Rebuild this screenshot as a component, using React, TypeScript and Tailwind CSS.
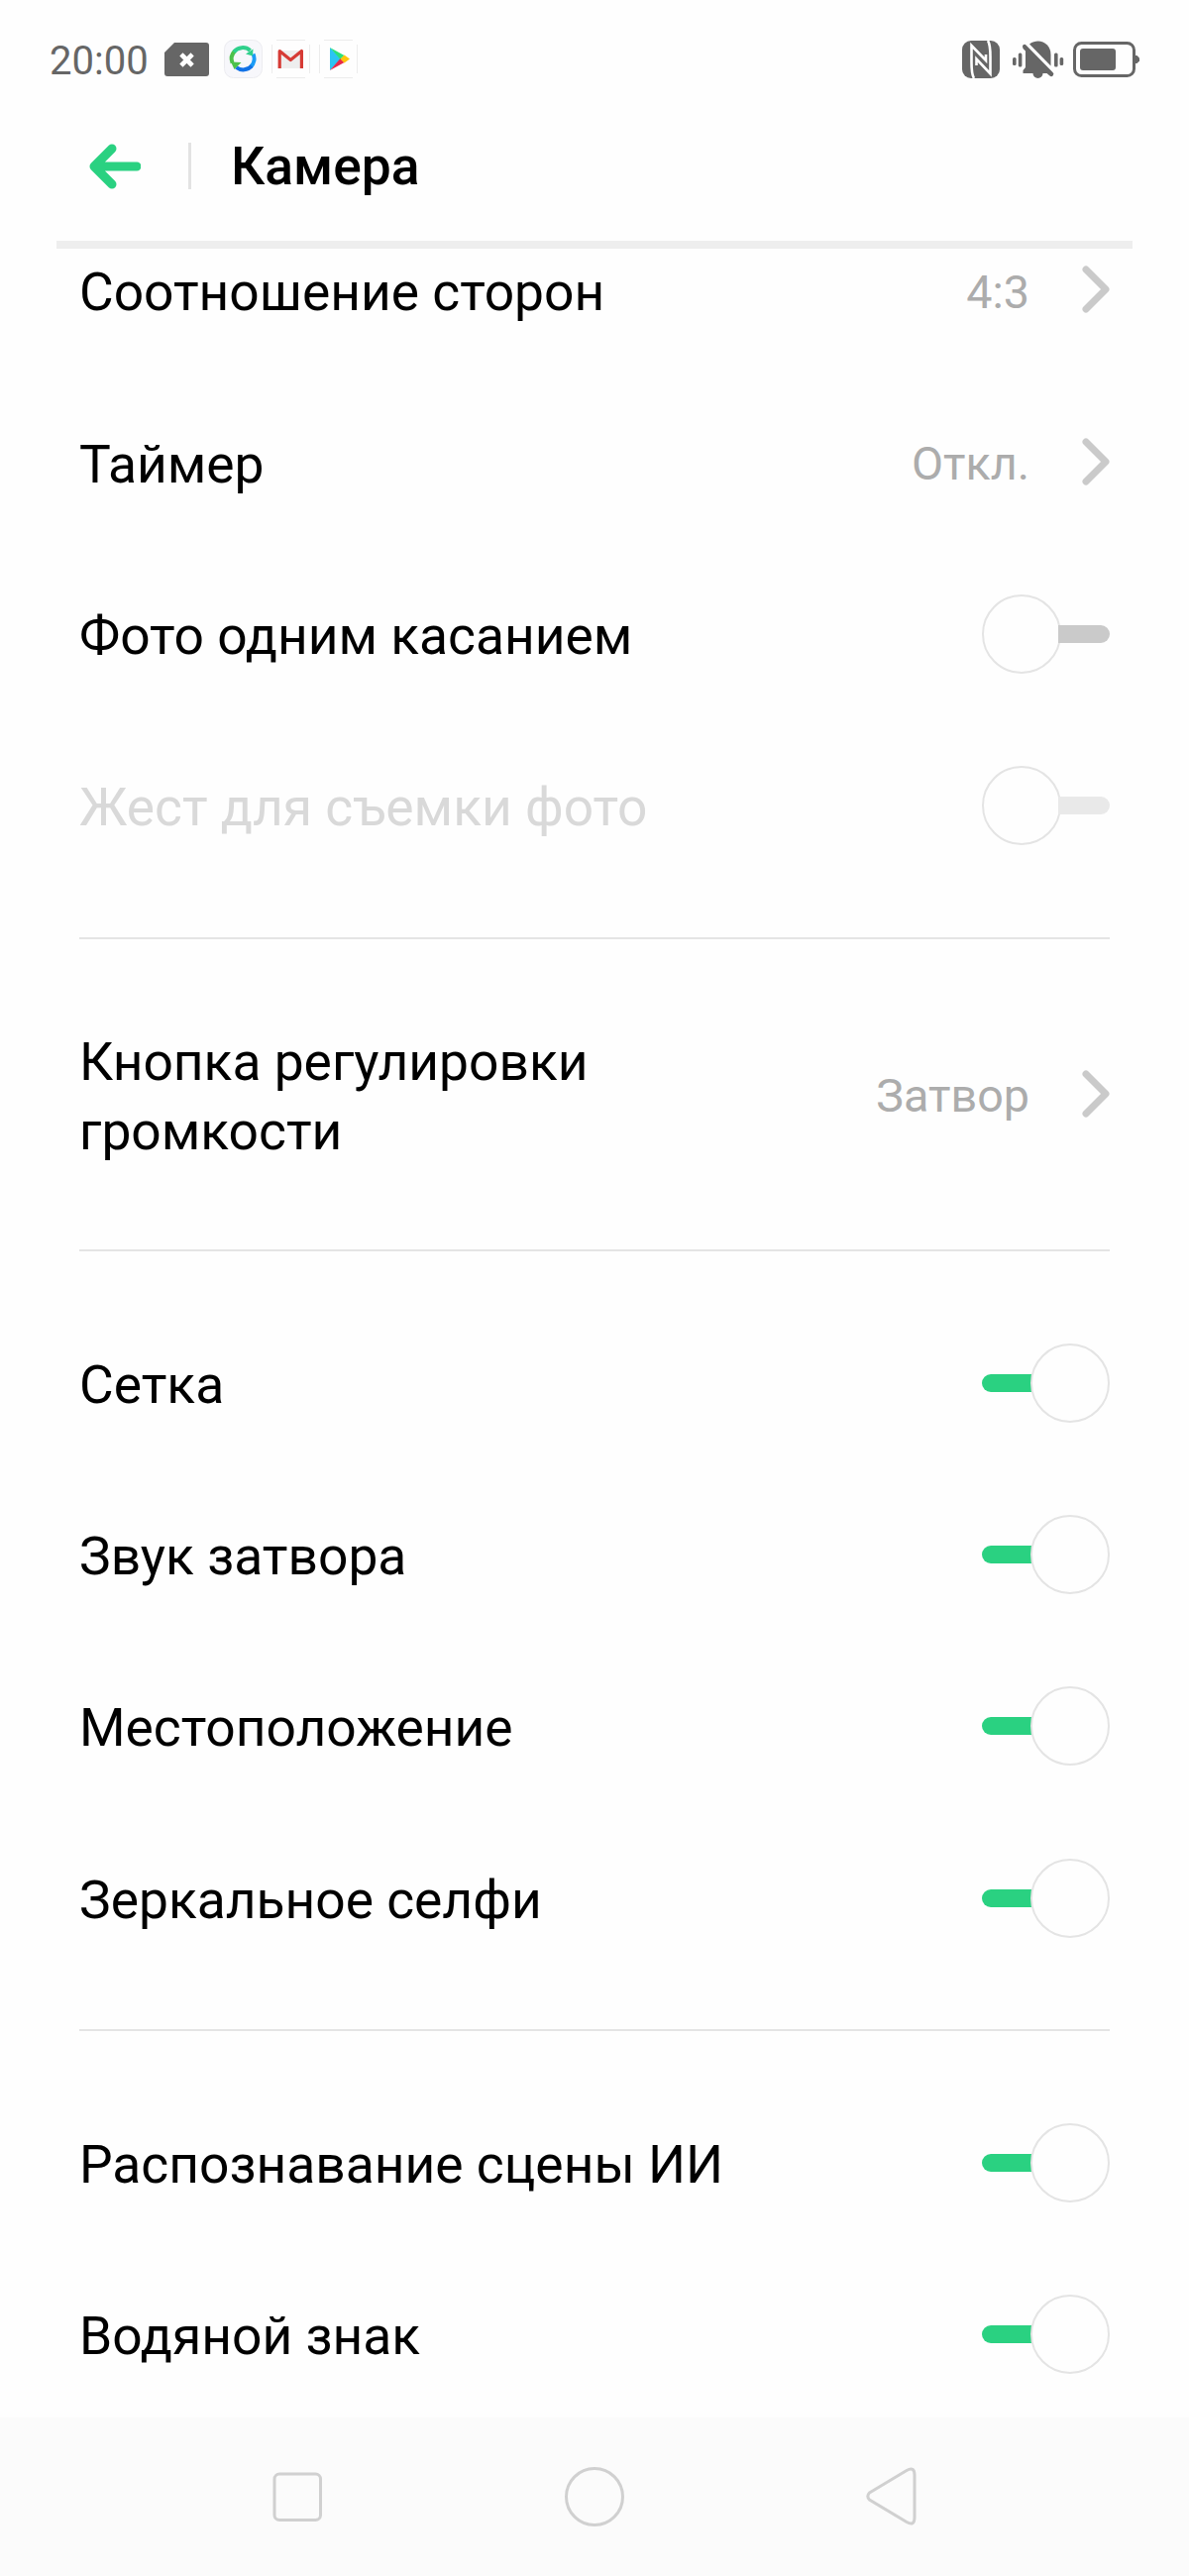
import { type ReactNode } from 'react';

type Item = {
  label: string;
  value?: string;
  on?: boolean;
  disabled?: boolean;
  tall?: boolean;
};

const sections: Item[][] = [
  [
    { label: 'Соотношение сторон', value: '4:3' },
    { label: 'Таймер', value: 'Откл.' },
    { label: 'Фото одним касанием', on: false },
    { label: 'Жест для съемки фото', on: false, disabled: true },
  ],
  [{ label: 'Кнопка регулировки громкости', value: 'Затвор', tall: true }],
  [
    { label: 'Сетка', on: true },
    { label: 'Звук затвора', on: true },
    { label: 'Местоположение', on: true },
    { label: 'Зеркальное селфи', on: true },
  ],
  [
    { label: 'Распознавание сцены ИИ', on: true },
    { label: 'Водяной знак', on: true },
  ],
];

const AppTile = ({ children }: { children: ReactNode }) => (
  <svg width="39" height="39" viewBox="0 0 39 39" fill="none">
    {children}
  </svg>
);

const StatusBar = () => {
  return (
    <div className="flex h-[119px] items-center justify-between px-[50px] text-[#666666]">
      <div className="flex items-center">
        <span className="w-[116px] pt-[4px] text-[40px] leading-none">20:00</span>
        <svg width="45" height="34" viewBox="0 0 45 34" className="mt-[1px] mr-[15px]">
          <path d="M10 0H42a3 3 0 0 1 3 3V31a3 3 0 0 1-3 3H3a3 3 0 0 1-3-3V10Z" fill="currentColor" />
          <path d="M18.500 13.500l8 8M26.500 13.500l-8 8" stroke="#fefefe" strokeWidth="4.600" strokeLinecap="square" />
        </svg>
        <div className="flex gap-[9px]">
          <AppTile>
            <rect x=".5" y=".5" width="38" height="38" rx="9" fill="#f7f7fb" stroke="#ececf0" />
            <path d="M8.500 23.500A11.300 11.300 0 0 1 11 11.500" stroke="#4cc14b" strokeWidth="4" />
            <path d="M10 12.500A11.300 11.300 0 0 1 26.500 11" stroke="#2fd08c" strokeWidth="4" />
            <path d="M29.500 14.500A11.300 11.300 0 0 1 27 27.500" stroke="#1c9cf6" strokeWidth="4" />
            <path d="M28 26.500A11.300 11.300 0 0 1 12.500 28" stroke="#1272e6" strokeWidth="4" />
            <path d="M22 14.500l7.500-5-.5 7z" fill="#2fd08c" />
            <path d="M7 22.500l10.500 .5-7 7z" fill="#4cc14b" />
          </AppTile>
          <AppTile>
            <path d="M5 .5H34M5 38.500H34M.5 5V34M38.500 5V34" stroke="#ececec" />
            <path d="M7 11h24v18H7z" fill="#eeeeee" />
            <path d="M8.200 29V11.500L19.300 20.500L30.400 11.500V29" stroke="#d63b35" strokeWidth="3.200" strokeLinejoin="round" />
          </AppTile>
          <AppTile>
            <path d="M5 .5H34M5 38.500H34M.5 5V34M38.500 5V34" stroke="#ececec" />
            <path d="M11 8v23L22 19.500z" fill="#2bc4f3" />
            <path d="M11 8l14.500 8-4 4z" fill="#2be07a" />
            <path d="M11 31l14.500-8-4-4z" fill="#e6294b" />
            <path d="M25.500 15.500l5.500 4-5.500 4-4-4z" fill="#fdc50c" />
          </AppTile>
        </div>
      </div>
      <div className="flex items-center">
        <svg width="38" height="38" viewBox="0 0 38 38" className="mr-[13px]">
          <rect width="38" height="38" rx="9" fill="currentColor" />
          <path
            d="M12 38C9.500 34 9.500 28 9.500 22V5L24 20V14M26 0C28.500 4 28.500 9 28.500 16V33.500L14.500 18.500V25"
            fill="none"
            stroke="#fefefe"
            strokeWidth="2.600"
          />
        </svg>
        <svg width="52" height="38" viewBox="0 0 52 38" className="mr-[9px]" fill="currentColor">
          <path d="M17 3.500C27-3.500 38.500 3 38.500 14V25.500z" />
          <path d="M10 6a2 2 0 0 1 3.500-1.500L40.500 32a2 2 0 0 1-3 3.500L34.500 33H30.500a5 5 0 0 1-10 0H10.500V30L13 27V10.500L10.500 8z" />
          <rect x="0" y="17" width="3.600" height="8" rx="1.500" />
          <rect x="5.800" y="12.500" width="3.600" height="14" rx="1.500" />
          <rect x="42" y="12.500" width="3.600" height="14" rx="1.500" />
          <rect x="47.600" y="17" width="3.600" height="8" rx="1.500" />
        </svg>
        <svg width="67" height="36" viewBox="0 0 67 36" fill="none">
          <rect x="1.500" y="1.500" width="60" height="33" rx="7" stroke="currentColor" strokeWidth="3" />
          <rect x="7" y="7" width="36" height="22" rx="3" fill="currentColor" />
          <path d="M63 14h1.500l2.500 2.500v3l-2.500 2.500H63z" fill="currentColor" />
        </svg>
      </div>
    </div>
  );
};

const Header = () => {
  return (
    <header className="flex h-[124px] items-start pl-[90px]">
      <svg width="52" height="46" viewBox="0 0 52 46" className="mt-[26px]" fill="none">
        <path d="M23 5L5 23L23 41M8 23H48" stroke="#2ad181" strokeWidth="9" strokeLinecap="round" strokeLinejoin="round" />
      </svg>
      <div className="mt-[25px] ml-[48px] h-[47px] w-[3px] bg-[#e3e3e3]" />
      <h1 className="mt-[18px] ml-[40px] text-[53.33px] leading-[62px] font-medium">Камера</h1>
    </header>
  );
};

const Switch = ({ on, disabled }: { on?: boolean; disabled?: boolean }) => {
  const track = on ? 'bg-[#2ad181]' : disabled ? 'bg-[#e9e9e9]' : 'bg-[#cacaca]';
  return (
    <div className={`flex w-[129px] items-center ${on ? '' : 'flex-row-reverse'}`}>
      <div className={`h-[18px] flex-1 ${track} ${on ? '-mr-[3px] rounded-l-full' : '-ml-[3px] rounded-r-full'}`} />
      <div className="size-[80px] shrink-0 rounded-full border-2 border-[#e4e4e4] bg-[#fefefe]" />
    </div>
  );
};

const Row = ({ label, value, on, disabled, tall }: Item) => {
  return (
    <div className={`flex items-center justify-between ${tall ? 'h-[221.7px]' : 'h-[173.33px]'}`}>
      <span
        className={`mt-[4px] max-w-[680px] text-[53.33px] leading-[70px] ${disabled ? 'text-[#d9d9d9]' : ''}`}
      >
        {label}
      </span>
      {value ? (
        <div className="flex items-center">
          <span className="mt-[4px] mr-[53px] text-[46.67px] leading-none text-[#acacac]">{value}</span>
          <svg width="28" height="48" viewBox="0 0 28 48" className="-mt-[2px]" fill="none">
            <path d="M4 4L24 24L4 44" stroke="#cacaca" strokeWidth="7" strokeLinecap="round" strokeLinejoin="round" />
          </svg>
        </div>
      ) : (
        <Switch on={on} disabled={disabled} />
      )}
    </div>
  );
};

const NavBar = () => {
  return (
    <nav className="h-[160px] shrink-0 bg-[#fbfbfb]">
      <svg width="1200" height="160" viewBox="0 0 1200 160" fill="none" stroke="#d0d0d0" strokeWidth="3">
        <rect x="277" y="57" width="46.500" height="46.500" rx="5" />
        <circle cx="600" cy="80" r="28.500" />
        <path d="M877.500 76L915 53.500Q923 49 923 58V101Q923 110 915 105.500L877.500 83Q874 79.500 877.500 76Z" />
      </svg>
    </nav>
  );
};

export default function App() {
  return (
    <div className="flex h-[2600px] w-[1200px] flex-col overflow-hidden bg-[#fefefe] font-['Roboto',sans-serif] text-black">
      <StatusBar />
      <Header />
      <div className="mx-[57px] h-[8px] shrink-0 bg-[#eeeeee]" />
      <main className="min-h-0 flex-1 overflow-hidden px-[80px]">
        {/* list is scrolled a little under the header */}
        <div className="-mt-[44.3px]">
          {sections.map((items, i) => (
            <section key={i} className={i > 0 ? 'mt-[45.7px] border-t-2 border-[#e4e4e4] pt-[46px]' : ''}>
              {items.map((item) => (
                <Row key={item.label} {...item} />
              ))}
            </section>
          ))}
        </div>
      </main>
      <NavBar />
    </div>
  );
}
